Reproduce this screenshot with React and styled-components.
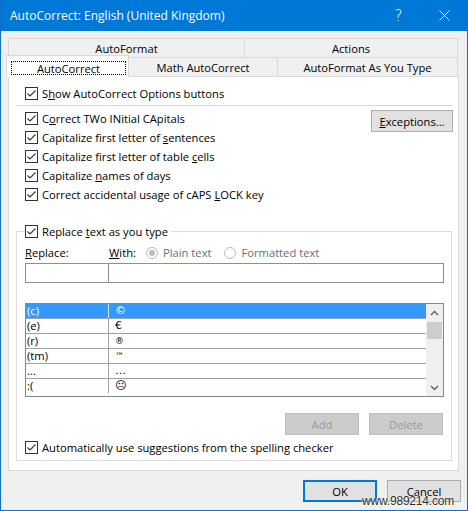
import React from "react";
import styled, { createGlobalStyle } from "styled-components";

const GlobalStyle = createGlobalStyle`
  html, body { margin: 0; padding: 0; background: #ffffff; }
  body {
    font-family: "Open Sans", "Noto Sans", sans-serif;
    font-size: 11.2px;
    color: #000;
  }
  * { box-sizing: border-box; }
`;

const Window = styled.div`
  position: relative;
  width: 468px;
  height: 511px;
  border: 1px solid #0f6fc6;
  border-top: none;
  background: #f0f0f0;
  display: flex;
  flex-direction: column;
  overflow: hidden;
`;

const TitleBar = styled.div`
  height: 31px;
  flex: none;
  background: #0078d7;
  color: #fff;
  display: flex;
  align-items: center;
  padding-left: 9px;
  font-size: 12px;
`;

const TitleText = styled.span`
  flex: 1;
  white-space: nowrap;
`;

const CaptionButton = styled.div`
  width: ${(p) => p.$w}px;
  height: 31px;
  display: flex;
  align-items: center;
  justify-content: center;
  font-size: 15px;
  font-family: "DejaVu Sans", sans-serif;
  font-weight: 200;
`;

const Body = styled.div`
  padding: 7px 8px 0 7px;
  display: flex;
  flex-direction: column;
`;

const TabRow = styled.div`
  display: flex;
  height: 19px;
`;

const Tab = styled.div`
  width: ${(p) => p.$w}px;
  margin-left: ${(p) => (p.$overlap ? -1 : 0)}px;
  height: 19px;
  border: 1px solid #d9d9d9;
  border-bottom: none;
  background: #f0f0f0;
  display: flex;
  align-items: center;
  justify-content: center;
  white-space: nowrap;
`;

const ActiveTab = styled.div`
  position: relative;
  z-index: 2;
  width: 123px;
  height: 22px;
  margin: -2px -1px 0 -2px;
  border: 1px solid #d9d9d9;
  border-bottom: none;
  background: #fff;
  display: flex;
`;

const FocusRect = styled.span`
  flex: 1;
  margin: 5px 2px 2px 4px;
  border: 1px dotted #000;
  display: flex;
  align-items: center;
  justify-content: center;
`;

const Panel = styled.div`
  border: 1px solid #d9d9d9;
  background: #fff;
  padding: 7px 5px 9px 7px;
  display: flex;
  flex-direction: column;
`;

const TopSection = styled.div`
  padding-left: 9px;
  display: flex;
  flex-direction: column;
`;

const CheckRowWrap = styled.div`
  height: 19px;
  display: flex;
  align-items: center;
  white-space: nowrap;
  color: ${(p) => (p.$disabled ? "#6d6d6d" : "#000")};
`;

const Box = styled.span`
  width: 13px;
  height: 13px;
  flex: none;
  border: 1px solid #333;
  background: #fff;
  margin-right: 4px;
  display: flex;
`;

const Separator = styled.div`
  height: 1px;
  background: #d5d5d5;
  margin-top: 2px;
`;

const OptionsSection = styled.div`
  display: flex;
  margin-top: 3px;
`;

const OptionsColumn = styled.div`
  display: flex;
  flex-direction: column;
  flex: 1;
`;

const Button = styled.div`
  width: ${(p) => p.$w || 74}px;
  height: 22px;
  flex: none;
  display: flex;
  align-items: center;
  justify-content: center;
  background: ${(p) => (p.$disabled ? "#cccccc" : "#e1e1e1")};
  border: ${(p) => (p.$default ? "2px solid #0078d7" : p.$disabled ? "1px solid #bfbfbf" : "1px solid #adadad")};
  color: ${(p) => (p.$disabled ? "#9a9a9a" : "#000")};
  white-space: nowrap;
`;

const ExceptionsButton = styled(Button)`
  margin-top: 1px;
`;

const GroupBox = styled.fieldset`
  margin: 18px 1px 0 0;
  padding: 0 7px 3px 8px;
  border: 1px solid #dcdcdc;
  min-width: 0;
`;

const Legend = styled.legend`
  padding: 0 3px 0 0;
  margin: 0;
`;

const LabelsRow = styled.div`
  display: flex;
  align-items: center;
  height: 19px;
  margin-top: 2px;
  white-space: nowrap;
`;

const FieldLabel = styled.span`
  width: ${(p) => p.$w}px;
  flex: none;
`;

const RadioOption = styled.span`
  display: flex;
  align-items: center;
  color: #6d6d6d;
  margin-right: 13px;
`;

const RadioCircle = styled.span`
  width: 12px;
  height: 12px;
  border-radius: 50%;
  border: 1px solid #bcbcbc;
  background: #fff;
  margin-right: 5px;
  display: flex;
  align-items: center;
  justify-content: center;
`;

const RadioDot = styled.span`
  width: 6px;
  height: 6px;
  border-radius: 50%;
  background: #bcbcbc;
`;

const InputsRow = styled.div`
  display: flex;
  margin-top: 1px;
`;

const TextInput = styled.div`
  height: 20px;
  border: 1px solid #8f8f8f;
  background: #fff;
  width: ${(p) => (p.$w ? `${p.$w}px` : "auto")};
  flex: ${(p) => (p.$w ? "none" : "1")};
  margin-left: ${(p) => (p.$joined ? -1 : 0)}px;
`;

const List = styled.div`
  margin-top: 20px;
  height: 94px;
  border: 1px solid #828790;
  display: flex;
  background: #fff;
`;

const Rows = styled.div`
  flex: 1;
  display: flex;
  flex-direction: column;
`;

const Row = styled.div`
  height: 15px;
  flex: none;
  display: flex;
  border-bottom: 1px solid ${(p) => (p.$last ? "transparent" : "#a0a0a0")};
  background: ${(p) => (p.$selected ? "#3399ff" : "#fff")};
  color: ${(p) => (p.$selected ? "#fff" : "#000")};
  line-height: 14px;
`;

const KeyCell = styled.div`
  width: 82px;
  padding-left: 1px;
  flex: none;
  white-space: nowrap;
`;

const ValueCell = styled.div`
  flex: 1;
  padding-left: 6px;
  border-left: 1px solid ${(p) => (p.$selected ? "#cfe6ff" : "#a0a0a0")};
  font-family: "DejaVu Sans", sans-serif;
  font-size: ${(p) => p.$size || 11}px;
  white-space: nowrap;
`;

const ScrollBar = styled.div`
  width: 17px;
  flex: none;
  background: #f0f0f0;
  display: flex;
  flex-direction: column;
`;

const ScrollArrow = styled.div`
  height: 17px;
  display: flex;
  align-items: center;
  justify-content: center;
`;

const ScrollTrack = styled.div`
  flex: 1;
  padding: 1px 1px 0 1px;
`;

const ScrollThumb = styled.div`
  height: 17px;
  background: #cdcdcd;
`;

const ButtonsRow = styled.div`
  display: flex;
  justify-content: flex-end;
  gap: 10px;
  margin-top: 16px;
  padding-right: 1px;
`;

const AutoRow = styled.div`
  margin-top: 3px;
`;

const Footer = styled.div`
  display: flex;
  justify-content: flex-end;
  gap: 10px;
  padding: 9px 6px 0 0;
`;

const Watermark = styled.div`
  position: absolute;
  right: 13px;
  bottom: 2px;
  font-family: "Liberation Sans", Arial, sans-serif;
  font-size: 12px;
  color: #2e2e2e;
  letter-spacing: -0.2px;
  text-shadow: 0 0 2px #fff, 0 0 1px #fff;
`;

function CheckBox({ children, checked = true }) {
  return (
    <CheckRowWrap>
      <Box>
        {checked && (
          <svg width="11" height="11" viewBox="0 0 11 11">
            <polyline points="1.5,5.5 4,8 9.5,2.5" fill="none" stroke="#333" strokeWidth="1.1" />
          </svg>
        )}
      </Box>
      <span>{children}</span>
    </CheckRowWrap>
  );
}

function Radio({ children, checked }) {
  return (
    <RadioOption>
      <RadioCircle>{checked && <RadioDot />}</RadioCircle>
      {children}
    </RadioOption>
  );
}

const entries = [
  { k: "(c)", v: "©", selected: true },
  { k: "(e)", v: "€" },
  { k: "(r)", v: "®", size: 9 },
  { k: "(tm)", v: "™", size: 9 },
  { k: "...", v: "…" },
  { k: ":(", v: "☹", last: true },
];

export default function App() {
  return (
    <>
      <GlobalStyle />
      <Window>
        <TitleBar>
          <TitleText>AutoCorrect: English (United Kingdom)</TitleText>
          <CaptionButton $w={45}>?</CaptionButton>
          <CaptionButton $w={46}>
            <svg width="11" height="11" viewBox="0 0 11 11">
              <path d="M0.5 0.5 L10.5 10.5 M10.5 0.5 L0.5 10.5" stroke="#fff" strokeWidth="1" />
            </svg>
          </CaptionButton>
        </TitleBar>
        <Body>
          <TabRow>
            <Tab $w={237}>AutoFormat</Tab>
            <Tab $w={214} $overlap>Actions</Tab>
          </TabRow>
          <TabRow>
            <ActiveTab>
              <FocusRect>AutoCorrect</FocusRect>
            </ActiveTab>
            <Tab $w={150}>Math AutoCorrect</Tab>
            <Tab $w={181} $overlap>AutoFormat As You Type</Tab>
          </TabRow>
          <Panel>
            <TopSection>
              <CheckBox>
                S<u>h</u>ow AutoCorrect Options buttons
              </CheckBox>
            </TopSection>
            <Separator />
            <TopSection>
              <OptionsSection>
                <OptionsColumn>
                  <CheckBox>
                    C<u>o</u>rrect TWo INitial CApitals
                  </CheckBox>
                  <CheckBox>
                    Capitalize first letter of <u>s</u>entences
                  </CheckBox>
                  <CheckBox>
                    Capitalize first letter of table <u>c</u>ells
                  </CheckBox>
                  <CheckBox>
                    Capitalize <u>n</u>ames of days
                  </CheckBox>
                  <CheckBox>
                    Correct accidental usage of cAPS <u>L</u>OCK key
                  </CheckBox>
                </OptionsColumn>
                <ExceptionsButton $w={82}>
                  <u>E</u>xceptions...
                </ExceptionsButton>
              </OptionsSection>
            </TopSection>
            <GroupBox>
              <Legend>
                <CheckBox>
                  Replace <u>t</u>ext as you type
                </CheckBox>
              </Legend>
              <LabelsRow>
                <FieldLabel $w={84}>
                  <u>R</u>eplace:
                </FieldLabel>
                <FieldLabel $w={37}>
                  <u>W</u>ith:
                </FieldLabel>
                <Radio checked>Plain text</Radio>
                <Radio>Formatted text</Radio>
              </LabelsRow>
              <InputsRow>
                <TextInput $w={84} />
                <TextInput $joined />
              </InputsRow>
              <List>
                <Rows>
                  {entries.map((e) => (
                    <Row key={e.k} $selected={e.selected} $last={e.last}>
                      <KeyCell>{e.k}</KeyCell>
                      <ValueCell $selected={e.selected} $size={e.size}>
                        {e.v}
                      </ValueCell>
                    </Row>
                  ))}
                </Rows>
                <ScrollBar>
                  <ScrollArrow>
                    <svg width="9" height="6" viewBox="0 0 9 6">
                      <polyline points="1,5 4.5,1.5 8,5" fill="none" stroke="#606060" strokeWidth="1.4" />
                    </svg>
                  </ScrollArrow>
                  <ScrollTrack>
                    <ScrollThumb />
                  </ScrollTrack>
                  <ScrollArrow>
                    <svg width="9" height="6" viewBox="0 0 9 6">
                      <polyline points="1,1 4.5,4.5 8,1" fill="none" stroke="#606060" strokeWidth="1.4" />
                    </svg>
                  </ScrollArrow>
                </ScrollBar>
              </List>
              <ButtonsRow>
                <Button $disabled>Add</Button>
                <Button $disabled>Delete</Button>
              </ButtonsRow>
              <AutoRow>
                <CheckBox>
                  Automatically use su<u>g</u>gestions from the spelling checker
                </CheckBox>
              </AutoRow>
            </GroupBox>
          </Panel>
        </Body>
        <Footer>
          <Button $default>OK</Button>
          <Button>Cancel</Button>
        </Footer>
        <Watermark>www.989214.com</Watermark>
      </Window>
    </>
  );
}
